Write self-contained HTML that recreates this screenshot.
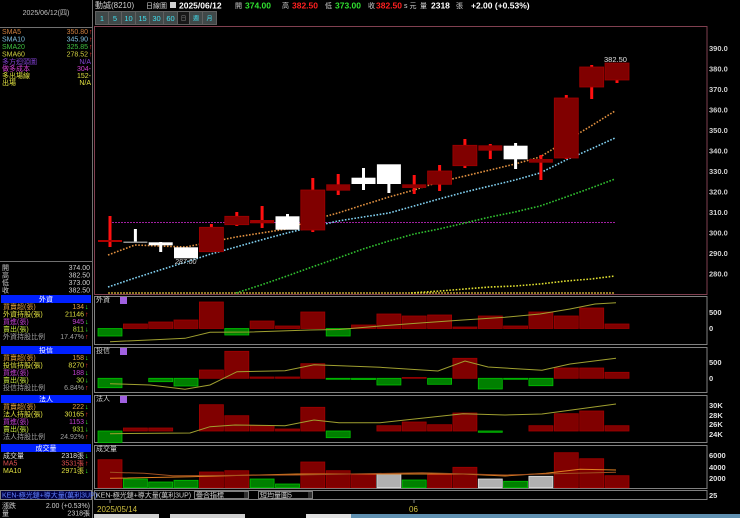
<!DOCTYPE html>
<html><head><meta charset="utf-8"><style>
html,body{margin:0;padding:0;background:#000;width:740px;height:518px;overflow:hidden}
svg{display:block}
text{font-family:"Liberation Sans","Noto Sans CJK TC",sans-serif}
.s{font-size:7px}
</style></head><body>
<svg width="740" height="518" viewBox="0 0 740 518" xmlns="http://www.w3.org/2000/svg">
<line x1="92.5" y1="0" x2="92.5" y2="518" stroke="#707070"/>
<line x1="0" y1="27.5" x2="92" y2="27.5" stroke="#707070"/>
<text x="46" y="15" class="s" fill="#c0c0c0" text-anchor="middle">2025/06/12(四)</text>
<g class="s">
<text x="2" y="34" fill="#d08040">SMA5</text><text x="88" y="34" fill="#d08040" text-anchor="end">350.80</text><text x="89" y="34" fill="#ff3030">↑</text>
<text x="2" y="41.5" fill="#80c0e0">SMA10</text><text x="88" y="41.5" fill="#80c0e0" text-anchor="end">345.90</text><text x="89" y="41.5" fill="#ff3030">↑</text>
<text x="2" y="49" fill="#40c040">SMA20</text><text x="88" y="49" fill="#40c040" text-anchor="end">325.85</text><text x="89" y="49" fill="#ff3030">↑</text>
<text x="2" y="56.5" fill="#d0d040">SMA60</text><text x="88" y="56.5" fill="#d0d040" text-anchor="end">278.52</text><text x="89" y="56.5" fill="#ff3030">↑</text>
<text x="2" y="64" fill="#8040d0">多方迴頭圖</text><text x="91" y="64" fill="#8040d0" text-anchor="end">N/A</text>
<text x="2" y="71" fill="#d040d0">做多成本</text><text x="91" y="71" fill="#d040d0" text-anchor="end">304-</text>
<text x="2" y="78" fill="#e0e040">多出場線</text><text x="91" y="78" fill="#e0e040" text-anchor="end">152-</text>
<text x="2" y="85" fill="#e0e040">出場</text><text x="91" y="85" fill="#e0e040" text-anchor="end">N/A</text>
</g>
<line x1="0" y1="261.5" x2="92" y2="261.5" stroke="#707070"/>
<g class="s" fill="#d0d0d0">
<text x="2" y="270">開</text><text x="90" y="270" text-anchor="end">374.00</text>
<text x="2" y="277.5">高</text><text x="90" y="277.5" text-anchor="end">382.50</text>
<text x="2" y="285">低</text><text x="90" y="285" text-anchor="end">373.00</text>
<text x="2" y="292.5">收</text><text x="90" y="292.5" text-anchor="end">382.50</text>
</g>
<g class="s">
<rect x="1" y="295" width="90" height="8" fill="#0020ff"/><text x="46" y="301.5" fill="#fff" text-anchor="middle">外資</text>
<text x="3" y="309" fill="#e0a040">買賣超(張)</text><text x="84" y="309" fill="#e0a040" text-anchor="end">134</text><text x="85" y="309" fill="#30ff30">↓</text>
<text x="3" y="316.5" fill="#e0e040">外資持股(張)</text><text x="84" y="316.5" fill="#e0e040" text-anchor="end">21146</text><text x="85" y="316.5" fill="#ff3030">↑</text>
<text x="3" y="324" fill="#c040d0">買進(張)</text><text x="84" y="324" fill="#c040d0" text-anchor="end">945</text><text x="85" y="324" fill="#30ff30">↓</text>
<text x="3" y="331.5" fill="#c0e040">賣出(張)</text><text x="84" y="331.5" fill="#c0e040" text-anchor="end">811</text><text x="85" y="331.5" fill="#30ff30">↓</text>
<text x="3" y="339" fill="#a0a0a0">外資持股比例</text><text x="84" y="339" fill="#a0a0a0" text-anchor="end">17.47%</text><text x="85" y="339" fill="#ff3030">↑</text>

<rect x="1" y="346" width="90" height="8" fill="#0020ff"/><text x="46" y="352.5" fill="#fff" text-anchor="middle">投信</text>
<text x="3" y="360" fill="#e0a040">買賣超(張)</text><text x="84" y="360" fill="#e0a040" text-anchor="end">158</text><text x="85" y="360" fill="#30ff30">↓</text>
<text x="3" y="367.5" fill="#e0e040">投信持股(張)</text><text x="84" y="367.5" fill="#e0e040" text-anchor="end">8270</text><text x="85" y="367.5" fill="#ff3030">↑</text>
<text x="3" y="375" fill="#c040d0">買進(張)</text><text x="84" y="375" fill="#c040d0" text-anchor="end">188</text><text x="85" y="375" fill="#30ff30">↓</text>
<text x="3" y="382.5" fill="#c0e040">賣出(張)</text><text x="84" y="382.5" fill="#c0e040" text-anchor="end">30</text><text x="85" y="382.5" fill="#30ff30">↓</text>
<text x="3" y="390" fill="#a0a0a0">投信持股比例</text><text x="84" y="390" fill="#a0a0a0" text-anchor="end">6.84%</text><text x="85" y="390" fill="#ff3030">↑</text>

<rect x="1" y="395" width="90" height="8" fill="#0020ff"/><text x="46" y="401.5" fill="#fff" text-anchor="middle">法人</text>
<text x="3" y="409" fill="#e0a040">買賣超(張)</text><text x="84" y="409" fill="#e0a040" text-anchor="end">222</text><text x="85" y="409" fill="#30ff30">↓</text>
<text x="3" y="416.5" fill="#e0e040">法人持股(張)</text><text x="84" y="416.5" fill="#e0e040" text-anchor="end">30165</text><text x="85" y="416.5" fill="#ff3030">↑</text>
<text x="3" y="424" fill="#c040d0">買進(張)</text><text x="84" y="424" fill="#c040d0" text-anchor="end">1153</text><text x="85" y="424" fill="#30ff30">↓</text>
<text x="3" y="431.5" fill="#c0e040">賣出(張)</text><text x="84" y="431.5" fill="#c0e040" text-anchor="end">931</text><text x="85" y="431.5" fill="#30ff30">↓</text>
<text x="3" y="439" fill="#a0a0a0">法人持股比例</text><text x="84" y="439" fill="#a0a0a0" text-anchor="end">24.92%</text><text x="85" y="439" fill="#ff3030">↑</text>

<rect x="1" y="444" width="90" height="8" fill="#0020ff"/><text x="46" y="450.5" fill="#fff" text-anchor="middle">成交量</text>
<text x="3" y="458" fill="#e0e0e0">成交量</text><text x="84" y="458" fill="#e0e0e0" text-anchor="end">2318張</text><text x="85" y="458" fill="#30ff30">↓</text>
<text x="3" y="465.5" fill="#e05050">MA5</text><text x="84" y="465.5" fill="#e05050" text-anchor="end">3531張</text><text x="85" y="465.5" fill="#ff3030">↑</text>
<text x="3" y="473" fill="#e0e040">MA10</text><text x="84" y="473" fill="#e0e040" text-anchor="end">2971張</text><text x="85" y="473" fill="#30ff30">↓</text>

<rect x="0.5" y="490.5" width="91" height="9" fill="#000040" stroke="#808080"/><text x="2" y="497.5" fill="#6080ff">KEN-極光鏈+導大量(萬利3UP)</text>
<text x="2" y="508" fill="#d0d0d0">漲跌</text><text x="90" y="508" fill="#d0d0d0" text-anchor="end">2.00 (+0.53%)</text>
<text x="2" y="515.5" fill="#d0d0d0">量</text><text x="90" y="515.5" fill="#d0d0d0" text-anchor="end">2318張</text>
</g>

<g font-size="8.5">
<text x="95" y="8" fill="#d0d0d0" font-size="8">動誠(8210)</text>
<text x="146" y="8" fill="#d0d0d0" font-size="7">日線圖</text>
<rect x="170" y="2" width="6" height="6" fill="#d0d0d0"/>
<text x="179" y="8.5" fill="#fff" font-weight="bold">2025/06/12</text>
<text x="235" y="8" fill="#d0d0d0" font-size="7">開</text>
<text x="245" y="8.5" fill="#30e030" font-weight="bold">374.00</text>
<text x="282" y="8" fill="#d0d0d0" font-size="7">高</text>
<text x="292" y="8.5" fill="#ff2020" font-weight="bold">382.50</text>
<text x="325" y="8" fill="#d0d0d0" font-size="7">低</text>
<text x="335" y="8.5" fill="#30e030" font-weight="bold">373.00</text>
<text x="368" y="8" fill="#d0d0d0" font-size="7">收</text>
<text x="376" y="8.5" fill="#ff2020" font-weight="bold">382.50</text>
<text x="404" y="8" fill="#d0d0d0" font-size="7">s 元</text>
<text x="420" y="8" fill="#d0d0d0" font-size="7">量</text>
<text x="431" y="8.5" fill="#fff" font-weight="bold">2318</text>
<text x="456" y="8" fill="#d0d0d0" font-size="7">張</text>
<text x="471" y="8.5" fill="#fff" font-weight="bold">+2.00 (+0.53%)</text>
</g>
<rect x="95" y="11" width="122" height="14" fill="#606060"/>
<g font-size="7.5" fill="#40e0f0" text-anchor="middle">
<rect x="96" y="12" width="12" height="12" fill="#404848"/><text x="102" y="21">1</text>
<rect x="109" y="12" width="12" height="12" fill="#404848"/><text x="115" y="21">5</text>
<rect x="122" y="12" width="13" height="12" fill="#404848"/><text x="128.5" y="21">10</text>
<rect x="136" y="12" width="13" height="12" fill="#404848"/><text x="142.5" y="21">15</text>
<rect x="150" y="12" width="13" height="12" fill="#404848"/><text x="156.5" y="21">30</text>
<rect x="164" y="12" width="13" height="12" fill="#404848"/><text x="170.5" y="21">60</text>
<rect x="178" y="12" width="11" height="12" fill="#181818"/><text x="183.5" y="20.5" fill="#808080" font-size="6">日</text>
<rect x="190" y="12" width="12" height="12" fill="#404848"/><text x="196" y="20.5" font-size="6">週</text>
<rect x="203" y="12" width="13" height="12" fill="#404848"/><text x="209.5" y="20.5" font-size="6">月</text>
</g>

<rect x="94.5" y="26.5" width="612.5" height="268" fill="none" stroke="#804050"/>
<g font-size="7.5" fill="#d0d0d0" font-weight="bold">
<text x="709" y="51">390.0</text><text x="709" y="71.5">380.0</text><text x="709" y="92">370.0</text>
<text x="709" y="112.5">360.0</text><text x="709" y="133">350.0</text><text x="709" y="153.5">340.0</text>
<text x="709" y="174">330.0</text><text x="709" y="194.5">320.0</text><text x="709" y="215">310.0</text>
<text x="709" y="235.5">300.0</text><text x="709" y="256">290.0</text><text x="709" y="276.5">280.0</text>
</g>
<line x1="112" y1="222.5" x2="615" y2="222.5" stroke="#a020a0" stroke-dasharray="2 1"/>
<line x1="108" y1="293" x2="615" y2="293" stroke="#c0a030" stroke-width="1.5" stroke-dasharray="2 1"/>
<g fill="none" stroke-width="1.6" stroke-dasharray="1.6 1.6">
<polyline stroke="#e09040" points="108,255 135,245 160,246 186,247 211,242 236,237 261,233 287,229 312,220 338,213 363,205 389,197 414,190 439,182 465,176 490,170 515,164 540,157 566,141 591,126 615,111"/>
<polyline stroke="#80d0f0" points="108,287 135,278 160,270 186,262 211,254 236,247 261,240 287,233 312,227 338,221 363,217 389,213 414,206 439,199 465,192 490,186 515,180 540,173 566,160 591,149 615,138"/>
<polyline stroke="#30c030" points="236,293 261,285 287,276 312,267 338,258 363,249 389,241 414,234 439,229 465,223 490,217 515,212 540,206 566,197 591,188 615,179"/>
<polyline stroke="#e0e030" points="411,293 440,291 465,289 490,287 515,286 540,284 566,281 591,279 615,276"/>
</g>
<g>
<line x1="110" y1="216" x2="110" y2="247" stroke="#ff1010" stroke-width="3"/><rect x="98" y="240" width="24" height="2" fill="#b00000"/>
<line x1="135.4" y1="229" x2="135.4" y2="242" stroke="#fff" stroke-width="3"/><rect x="123.4" y="241.5" width="24" height="1.5" fill="#909090"/>
<line x1="160.7" y1="242" x2="160.7" y2="252" stroke="#fff" stroke-width="3"/><rect x="148.7" y="242.3" width="24" height="3" fill="#fff"/>
<rect x="174" y="247.3" width="24" height="11" fill="#fff"/>
<line x1="211.4" y1="224" x2="211.4" y2="228" stroke="#ff1010" stroke-width="3"/><rect x="199.4" y="227.3" width="24" height="24.4" fill="#800000" stroke="#a00000" stroke-width="0.8"/>
<line x1="236.8" y1="212" x2="236.8" y2="226" stroke="#ff1010" stroke-width="3"/><rect x="224.8" y="216.3" width="24" height="8.4" fill="#800000" stroke="#a00000" stroke-width="0.8"/>
<line x1="262.1" y1="206" x2="262.1" y2="228" stroke="#ff1010" stroke-width="3"/><rect x="250.1" y="220" width="24" height="3.3" fill="#a00000"/>
<line x1="287.5" y1="214" x2="287.5" y2="217" stroke="#fff" stroke-width="3"/><rect x="275.5" y="216.3" width="24" height="13.4" fill="#fff"/>
<line x1="312.8" y1="178" x2="312.8" y2="232" stroke="#ff1010" stroke-width="3"/><rect x="300.8" y="190" width="24" height="40" fill="#800000" stroke="#a00000" stroke-width="0.8"/>
<line x1="338.2" y1="174" x2="338.2" y2="195" stroke="#ff1010" stroke-width="3"/><rect x="326.2" y="184.3" width="24" height="6.4" fill="#900000"/>
<line x1="363.5" y1="168" x2="363.5" y2="190" stroke="#fff" stroke-width="3"/><rect x="351.5" y="177.7" width="24" height="6.3" fill="#fff"/>
<line x1="388.9" y1="184" x2="388.9" y2="193" stroke="#fff" stroke-width="3"/><rect x="376.9" y="164.3" width="24" height="19.7" fill="#fff"/>
<line x1="414.2" y1="175" x2="414.2" y2="194" stroke="#ff1010" stroke-width="3"/><rect x="402.2" y="184.3" width="24" height="3.7" fill="#900000"/>
<line x1="439.6" y1="165" x2="439.6" y2="191" stroke="#ff1010" stroke-width="3"/><rect x="427.6" y="171" width="24" height="13.3" fill="#800000" stroke="#a00000" stroke-width="0.8"/>
<line x1="464.9" y1="139" x2="464.9" y2="168" stroke="#ff1010" stroke-width="3"/><rect x="452.9" y="145.3" width="24" height="20.4" fill="#800000" stroke="#a00000" stroke-width="0.8"/>
<line x1="490.3" y1="144" x2="490.3" y2="159" stroke="#ff1010" stroke-width="3"/><rect x="478.3" y="145.3" width="24" height="5.4" fill="#900000"/>
<line x1="515.6" y1="143" x2="515.6" y2="169" stroke="#fff" stroke-width="3"/><rect x="503.6" y="145.7" width="24" height="13.6" fill="#fff"/>
<line x1="540.9" y1="155" x2="540.9" y2="180" stroke="#ff1010" stroke-width="3"/><rect x="528.9" y="159" width="24" height="3.7" fill="#900000"/>
<line x1="566.3" y1="95" x2="566.3" y2="159" stroke="#ff1010" stroke-width="3"/><rect x="554.3" y="98" width="24" height="60" fill="#800000" stroke="#a00000" stroke-width="0.8"/>
<line x1="591.7" y1="65" x2="591.7" y2="99" stroke="#ff1010" stroke-width="3"/><rect x="579.7" y="67" width="24" height="20" fill="#800000" stroke="#a00000" stroke-width="0.8"/>
<line x1="617" y1="79" x2="617" y2="83" stroke="#ff1010" stroke-width="3"/><rect x="605" y="63" width="24" height="17" fill="#800000" stroke="#a00000" stroke-width="0.8"/>
</g>
<text x="604" y="62" font-size="7.5" fill="#e0e0e0">382.50</text>
<text x="175" y="264" font-size="7" fill="#d0d0d0" font-style="italic">287.00</text>

<g fill="none" stroke="#808080">
<rect x="94.5" y="296.5" width="612.5" height="48"/>
<rect x="94.5" y="347.5" width="612.5" height="45"/>
<rect x="94.5" y="395.5" width="612.5" height="47"/>
<rect x="94.5" y="445.5" width="612.5" height="43"/>
<rect x="94.5" y="490.5" width="612.5" height="9"/>
</g>
<g class="s" fill="#d0d0d0">
<text x="96" y="302">外資</text><text x="96" y="353">投信</text><text x="96" y="401">法人</text><text x="96" y="451">成交量</text>
</g>
<rect x="120" y="297" width="7" height="7" fill="#a060e0"/><rect x="120" y="348" width="7" height="7" fill="#a060e0"/><rect x="120" y="396" width="7" height="7" fill="#a060e0"/>
<g font-size="7.5" fill="#e0e0e0" font-weight="bold">
<text x="709" y="315">500</text><text x="709" y="331">0</text>
<text x="709" y="365">500</text><text x="709" y="381">0</text>
<text x="709" y="408">30K</text><text x="709" y="418">28K</text><text x="709" y="427">26K</text><text x="709" y="437">24K</text>
<text x="709" y="458">6000</text><text x="709" y="470">4000</text><text x="709" y="481">2000</text>
<text x="709" y="498">25</text>
</g>
<g stroke-width="0.8">
<g fill="#800000" stroke="#a00000">
<rect x="123.4" y="324" width="24" height="4.5"/><rect x="148.7" y="322" width="24" height="6.5"/><rect x="174" y="320" width="24" height="8.5"/><rect x="199.4" y="302" width="24" height="26.5"/><rect x="250.1" y="321" width="24" height="7.5"/><rect x="275.5" y="326" width="24" height="2.5"/><rect x="300.8" y="312" width="24" height="16.5"/><rect x="351.5" y="325" width="24" height="3.5"/><rect x="376.9" y="314" width="24" height="14.5"/><rect x="402.2" y="316" width="24" height="12.5"/><rect x="427.6" y="315" width="24" height="13.5"/><rect x="452.9" y="327" width="24" height="1.5"/><rect x="478.3" y="316" width="24" height="12.5"/><rect x="503.6" y="326" width="24" height="2.5"/><rect x="528.9" y="312" width="24" height="16.5"/><rect x="554.3" y="316" width="24" height="12.5"/><rect x="579.7" y="308" width="24" height="20.5"/><rect x="605" y="324" width="24" height="4.5"/>
</g>
<g fill="#008000" stroke="#00c000">
<rect x="98" y="328.5" width="24" height="7.5"/><rect x="224.8" y="328.5" width="24" height="6.5"/><rect x="326.2" y="328.5" width="24" height="7.5"/>
</g>
<g fill="#800000" stroke="#a00000">
<rect x="199.4" y="370" width="24" height="8.3"/><rect x="224.8" y="351.3" width="24" height="27"/><rect x="250.1" y="377" width="24" height="1.3"/><rect x="275.5" y="377" width="24" height="1.3"/><rect x="300.8" y="363.7" width="24" height="14.6"/><rect x="402.2" y="377.5" width="24" height="0.8"/><rect x="452.9" y="358.3" width="24" height="20"/><rect x="554.3" y="368" width="24" height="10.3"/><rect x="579.7" y="368" width="24" height="10.3"/><rect x="605" y="372.3" width="24" height="6"/>
</g>
<g fill="#008000" stroke="#00c000">
<rect x="98" y="378.3" width="24" height="9.4"/><rect x="148.7" y="378.3" width="24" height="3.4"/><rect x="174" y="378.3" width="24" height="7.7"/><rect x="326.2" y="378.3" width="24" height="1"/><rect x="351.5" y="378.3" width="24" height="1.2"/><rect x="376.9" y="378.3" width="24" height="6.7"/><rect x="427.6" y="378.3" width="24" height="6"/><rect x="478.3" y="378.3" width="24" height="10.7"/><rect x="503.6" y="378.3" width="24" height="1"/><rect x="528.9" y="378.3" width="24" height="7.4"/>
</g>
<g fill="#800000" stroke="#a00000">
<rect x="123.4" y="428" width="24" height="3"/><rect x="148.7" y="428" width="24" height="3"/><rect x="199.4" y="404.7" width="24" height="26.3"/><rect x="224.8" y="415.7" width="24" height="15.3"/><rect x="250.1" y="425.7" width="24" height="5.3"/><rect x="275.5" y="429" width="24" height="2"/><rect x="300.8" y="407.3" width="24" height="23.7"/><rect x="376.9" y="425.7" width="24" height="5.3"/><rect x="402.2" y="422" width="24" height="9"/><rect x="427.6" y="424.7" width="24" height="6.3"/><rect x="452.9" y="413" width="24" height="18"/><rect x="528.9" y="425.7" width="24" height="5.3"/><rect x="554.3" y="413.7" width="24" height="17.3"/><rect x="579.7" y="411" width="24" height="20"/><rect x="605" y="425.7" width="24" height="5.3"/>
</g>
<g fill="#008000" stroke="#00c000">
<rect x="98" y="431" width="24" height="11.5"/><rect x="326.2" y="431" width="24" height="6.7"/><rect x="478.3" y="431" width="24" height="1.3"/>
</g>
<g fill="#800000" stroke="#a00000">
<rect x="98" y="459.7" width="24" height="28"/><rect x="199.4" y="472" width="24" height="15.7"/><rect x="224.8" y="470.7" width="24" height="17"/><rect x="300.8" y="462" width="24" height="25.7"/><rect x="326.2" y="470.7" width="24" height="17"/><rect x="351.5" y="474.7" width="24" height="13"/><rect x="427.6" y="474.7" width="24" height="13"/><rect x="452.9" y="467.3" width="24" height="20.4"/><rect x="554.3" y="452.7" width="24" height="35"/><rect x="579.7" y="458.7" width="24" height="29"/><rect x="605" y="475.7" width="24" height="12"/>
</g>
<g fill="#008000" stroke="#00c000">
<rect x="123.4" y="479" width="24" height="8.7"/><rect x="148.7" y="482" width="24" height="5.7"/><rect x="174" y="480.3" width="24" height="7.4"/><rect x="250.1" y="479" width="24" height="8.7"/><rect x="275.5" y="484" width="24" height="3.7"/><rect x="402.2" y="480" width="24" height="7.7"/><rect x="503.6" y="481.3" width="24" height="6.4"/>
</g>
<g fill="#b0b0b0" stroke="#e0e0e0">
<rect x="376.9" y="473.7" width="24" height="14"/><rect x="478.3" y="479" width="24" height="8.7"/><rect x="528.9" y="476.3" width="24" height="11.4"/>
</g>
</g>
<g fill="none" stroke-width="1">
<polyline stroke="#a0a030" points="110,341.7 160,339.5 185,338.3 210,332.3 250,332 310,330 339,329.5 380,326 420,323 463,320 505,317.3 540,314 570,309 595,304 616,302.7"/>
<polyline stroke="#a0a030" points="110,383.7 150,385 185,389.3 210,385 237,371.7 285,370.7 314,364.7 380,367.3 438,371 465,361 488,367 542,370.3 570,364 616,358.3"/>
<polyline stroke="#a0a030" points="110,433.7 190,433 210,426.7 235,425 285,425.7 314,420 339,422.7 380,422.7 463,413.7 505,415 542,414 616,404"/>
<polyline stroke="#e08020" points="110,478.3 190,476.7 297,474 463,474 505,476 546,473.3 580,469.3 616,470"/>
<polyline stroke="#a05020" points="110,472.3 144,473.3 173,475.7 297,475 422,472.7 505,475 616,472.3"/>
</g>
<g class="s">
<text x="96" y="497.5" fill="#d0d0d0">KEN-極光鏈+導大量(萬利3UP)</text>
<rect x="194.5" y="491.5" width="54" height="7" fill="#000" stroke="#808080"/><text x="196" y="497.5" fill="#d0d0d0">疊合指標</text><rect x="244" y="492" width="4" height="6" fill="#303030"/>
<rect x="258.5" y="491.5" width="54" height="7" fill="#000" stroke="#808080"/><text x="260" y="497.5" fill="#d0d0d0">短均量圖5</text><rect x="308" y="492" width="4" height="6" fill="#303030"/>
</g>
<line x1="110" y1="500" x2="110" y2="503" stroke="#808080"/><line x1="414" y1="500" x2="414" y2="503" stroke="#808080"/>
<text x="97" y="512" font-size="8" fill="#d0c040">2025/05/14</text>
<text x="409" y="512" font-size="8" fill="#d0c040">06</text>
<rect x="94" y="514" width="65" height="4" fill="#d0d0d0"/><rect x="170" y="514" width="75" height="4" fill="#d0d0d0"/>
<rect x="306" y="514" width="434" height="4" fill="#6090b0"/><rect x="306" y="514" width="45" height="4" fill="#e0e0e0"/>
</svg>
</body></html>
